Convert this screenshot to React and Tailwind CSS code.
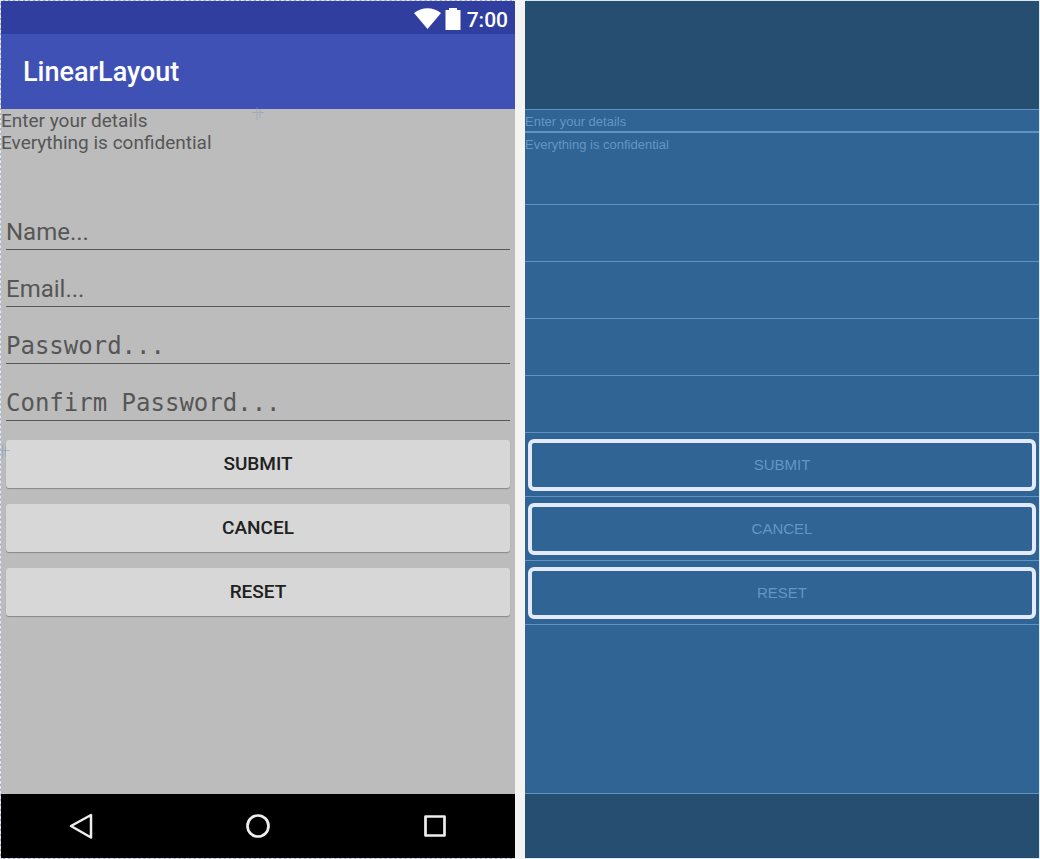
const fields = [
  { id: "name", type: "text", hint: "Name...", font: "font-['Roboto',sans-serif]" },
  { id: "email", type: "email", hint: "Email...", font: "font-['Roboto',sans-serif]" },
  { id: "password", type: "password", hint: "Password...", font: "font-['DejaVu_Sans_Mono',monospace]" },
  { id: "confirm", type: "password", hint: "Confirm Password...", font: "font-['DejaVu_Sans_Mono',monospace]" },
];

const actions = ["SUBMIT", "CANCEL", "RESET"];

function StatusBar() {
  return (
    <div className="flex h-[33px] items-center justify-end bg-[#303f9f] pt-1 pr-[7px] text-white">
      <svg width="27" height="21" viewBox="0 0 26 21" fill="currentColor" preserveAspectRatio="none" className="mb-0.5" aria-hidden="true">
        <path d="M0 5C7.500-1.400 18.500-1.400 26 5L13 21Z" />
      </svg>
      <svg className="ml-1 mb-0.5" width="16" height="22" viewBox="0 0 16 22" fill="currentColor" aria-hidden="true">
        <path d="M4 0h8v2h3.500v20H0.500V2H4z" />
      </svg>
      <span className="ml-1.5 text-[21px] leading-8 font-medium">7:00</span>
    </div>
  );
}

function NavBar() {
  return (
    <nav className="grid h-16 grid-cols-[160px_1fr_160px] items-center justify-items-center bg-black text-[#eeeeee]">
      <button type="button" aria-label="Back">
        <svg width="26" height="28" viewBox="0 0 26 28" fill="none" stroke="currentColor" strokeWidth="2.500" strokeLinejoin="round" aria-hidden="true">
          <path d="M23 3v22.500L3 14z" />
        </svg>
      </button>
      <button type="button" aria-label="Home">
        <svg width="26" height="26" viewBox="0 0 26 26" fill="none" stroke="currentColor" strokeWidth="2.700" aria-hidden="true">
          <circle cx="13" cy="13" r="10.500" />
        </svg>
      </button>
      <button type="button" aria-label="Recent apps">
        <svg width="24" height="24" viewBox="0 0 24 24" fill="none" stroke="currentColor" strokeWidth="2.700" strokeLinejoin="round" aria-hidden="true">
          <path d="M2.500 2.500h19v19h-19z" />
        </svg>
      </button>
    </nav>
  );
}

function Handle({ className }) {
  return (
    <svg className={`absolute text-[#7f9cc4] opacity-60 ${className}`} width="13" height="13" viewBox="0 0 13 13" stroke="currentColor" aria-hidden="true">
      <path d="M0 5.500h13M5.500 0v13M8.500 2v9" strokeWidth="0.800" />
    </svg>
  );
}

function DesignPreview() {
  return (
    <section className="flex flex-col border-y border-l border-dashed border-[#e4e8f4] bg-[#a9aebf] font-['Roboto',sans-serif]">
      <StatusBar />
      <header className="flex h-[75px] items-center bg-[#3f51b5] pl-[22px]">
        <h1 className="text-[27px] leading-8 font-medium text-white">LinearLayout</h1>
      </header>
      <main className="relative flex-1 bg-[#bcbcbc]">
        <div className="h-[95px] pt-px text-[19px] leading-[22px] text-[#565656]">
          <p>Enter your details</p>
          <p>Everything is confidential</p>
        </div>
        <form>
          {fields.map((f) => (
            <div key={f.id} className="h-[57px] px-[5px]">
              <input
                id={f.id}
                type={f.type}
                aria-label={f.hint}
                placeholder={f.hint}
                className={`block h-[46px] w-full border-b border-[#565656] bg-transparent pt-2.5 text-2xl outline-none placeholder:text-[#565656] ${f.font}`}
              />
            </div>
          ))}
          <div className="flex flex-col gap-4 px-[5px] pt-2">
            {actions.map((a) => (
              <button
                key={a}
                type="button"
                className="h-12 rounded-[3px] bg-[#d7d7d7] text-[19px] leading-6 font-medium text-[#202020] shadow-[0_1px_1px_0_#888888]"
              >
                {a}
              </button>
            ))}
          </div>
        </form>
        <Handle className="-top-0.5 left-1/2 -translate-x-1/2" />
        <Handle className="top-[336px] -left-1" />
      </main>
      <NavBar />
    </section>
  );
}

function Blueprint() {
  return (
    <section className="flex flex-col border-y border-r border-[#dceaf5] bg-[#264e70] pt-[108px] pb-16 font-['Liberation_Sans',sans-serif] text-[#6496c8]">
      <div className="flex-1 border-y border-[#5f93c4] bg-[#2f6494]">
        <p className="h-[23px] border-b-2 border-[#5f93c4] text-[13px] leading-6">Enter your details</p>
        <p className="h-[72px] border-b border-[#5f93c4] text-[13px] leading-6">Everything is confidential</p>
        {fields.map((f) => (
          <div key={f.id} className="h-[57px] border-b border-[#5f93c4]" />
        ))}
        {actions.map((a) => (
          <div key={a} className="border-b border-[#5f93c4] px-[3px] pt-1.5 pb-[5px]">
            <button type="button" className="block h-[52px] w-full rounded-md border-4 border-[#e2eafb] text-[15px] leading-6">
              {a}
            </button>
          </div>
        ))}
      </div>
    </section>
  );
}

export default function App() {
  return (
    <div className="grid min-h-screen grid-cols-2 gap-2.5 bg-[#f3f3f1]">
      <DesignPreview />
      <Blueprint />
    </div>
  );
}
